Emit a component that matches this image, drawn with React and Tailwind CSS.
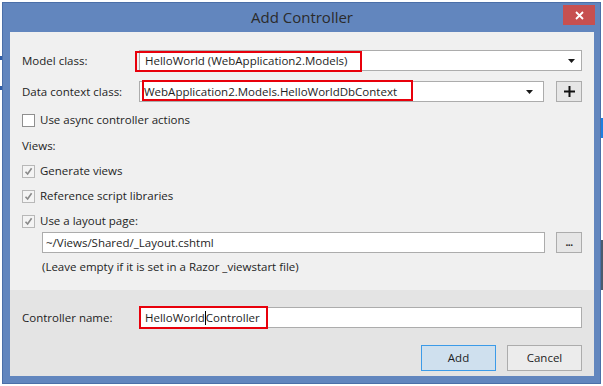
import React from 'react';

function Arrow() {
    return (
        <svg width="7" height="4" viewBox="0 0 7 4" className="shrink-0">
            <path d="M0 0 L7 0 L3.5 4 Z" fill="#1a1a1a" />
        </svg>
    );
}

function Check({ checked }) {
    return (
        <div
            className={
                'w-[13px] h-[13px] border shrink-0 flex items-center justify-center ' +
                (checked ? 'border-[#b8b8b8] bg-[#f4f4f4]' : 'border-[#8f8f8f] bg-white')
            }
        >
            {checked && (
                <svg width="9" height="9" viewBox="0 0 9 9">
                    <path d="M1.5 4.8 L3.6 7 L7.6 1.2" fill="none" stroke="#8a8a8a" strokeWidth="1.6" />
                </svg>
            )}
        </div>
    );
}

function CheckRow({ checked, label, className = '' }) {
    return (
        <div className={'flex items-center gap-[5px] pl-[12px] h-[16px] ' + className}>
            <Check checked={checked} />
            <span>{label}</span>
        </div>
    );
}

export default function App() {
    return (
        <div className="relative w-[603px] h-[386px] overflow-hidden bg-white text-[11.5px] text-[#1e1e1e] font-['Open_Sans','Noto_Sans',sans-serif] leading-none">
            {/* bits of the IDE behind the dialog */}
            <div className="absolute left-0 top-[56px] w-[2px] h-[4px] bg-[#2f5da8]" />
            <div className="absolute left-0 top-[86px] w-[2px] h-[4px] bg-[#2f5da8]" />
            <div className="absolute right-0 top-[118px] w-[2px] h-[20px] bg-[#1e7fe0]" />
            <div className="absolute right-0 top-[240px] w-[2px] h-[50px] bg-[#4a5a6e]" />

            <div className="absolute left-[2px] top-[2px] w-[599px] h-[382px] bg-[#6286be] border border-[#4b6fa8] flex flex-col pl-[7px] pr-[6px] pb-[7px]">
                <div className="relative h-[29px] shrink-0 flex items-center justify-center">
                    <span className="text-[15px] text-[#2b2b2b] font-['Open_Sans',sans-serif]">Add Controller</span>
                    <div className="absolute right-[-1px] top-[2px] w-[32px] h-[20px] bg-[#c75050] flex items-center justify-center">
                        <svg width="9" height="9" viewBox="0 0 9 9">
                            <path d="M1 1 L8 8 M8 1 L1 8" stroke="white" strokeWidth="1.8" />
                        </svg>
                    </div>
                </div>

                <div className="flex-1 flex flex-col bg-[#f0f0f0] relative">
                    <div className="h-[258px] shrink-0 flex flex-col">
                        <div className="flex items-center mt-[18px] h-[21px]">
                            <span className="w-[129px] pl-[12px] shrink-0">Model class:</span>
                            <div className="w-[443px] h-[21px] bg-white border border-[#acacac] flex items-center pl-[5px] pr-[6px]">
                                <span className="flex-1">HelloWorld (WebApplication2.Models)</span>
                                <Arrow />
                            </div>
                        </div>

                        <div className="flex items-center mt-[10px] h-[21px]">
                            <span className="w-[129px] pl-[12px] shrink-0">Data context class:</span>
                            <div className="w-[405px] h-[21px] bg-white border border-[#acacac] flex items-center pl-[4px] pr-[10px]">
                                <span className="flex-1">WebApplication2.Models.HelloWorldDbContext</span>
                                <Arrow />
                            </div>
                            <div className="ml-[12px] w-[26px] h-[21px] bg-[#e6e6e6] border border-[#acacac] flex items-center justify-center">
                                <svg width="11" height="11" viewBox="0 0 11 11">
                                    <path d="M5.5 0 V11 M0 5.5 H11" stroke="#111" strokeWidth="2" />
                                </svg>
                            </div>
                        </div>

                        <CheckRow checked={false} label="Use async controller actions" className="mt-[10px]" />

                        <div className="pl-[12px] mt-[10px] h-[16px] flex items-center">Views:</div>

                        <CheckRow checked label="Generate views" className="mt-[9px]" />
                        <CheckRow checked label="Reference script libraries" className="mt-[9px]" />
                        <CheckRow checked label="Use a layout page:" className="mt-[9px]" />

                        <div className="flex items-center mt-[3px] h-[21px] pl-[32px]">
                            <div className="w-[503px] h-[21px] bg-white border border-[#acacac] flex items-center pl-[3px]">
                                ~/Views/Shared/_Layout.cshtml
                            </div>
                            <div className="ml-[11px] w-[26px] h-[21px] bg-[#e6e6e6] border border-[#acacac] flex items-end justify-center pb-[5px] text-[10px] font-bold tracking-[-0.5px]">
                                ...
                            </div>
                        </div>

                        <div className="pl-[32px] mt-[6px] h-[16px] flex items-center">
                            (Leave empty if it is set in a Razor _viewstart file)
                        </div>
                    </div>

                    <div className="flex-1 bg-[#e4e4e4] flex flex-col">
                        <div className="flex items-center mt-[17px] h-[21px]">
                            <span className="w-[129px] pl-[12px] shrink-0">Controller name:</span>
                            <div className="w-[443px] h-[21px] bg-white border border-[#acacac] flex items-center pl-[5px]">
                                <span>HelloWorld</span>
                                <span className="w-px h-[14px] bg-black" />
                                <span>Controller</span>
                            </div>
                        </div>

                        <div className="flex justify-end gap-[11px] pr-[12px] mt-[17px]">
                            <button className="w-[75px] h-[26px] bg-[#cfe0ee] border border-[#3c9be8] flex items-center justify-center">
                                Add
                            </button>
                            <button className="w-[75px] h-[26px] bg-[#ececec] border border-[#acacac] flex items-center justify-center">
                                Cancel
                            </button>
                        </div>
                    </div>

                    {/* red highlight boxes drawn over the dialog */}
                    <div className="absolute left-[125px] top-[19px] w-[227px] h-[21px] border-2 border-[#e8000b]" />
                    <div className="absolute left-[132px] top-[48px] w-[271px] h-[21px] border-2 border-[#e8000b]" />
                    <div className="absolute left-[129px] top-[274px] w-[129px] h-[23px] border-2 border-[#e8000b]" />
                </div>
            </div>
        </div>
    );
}
